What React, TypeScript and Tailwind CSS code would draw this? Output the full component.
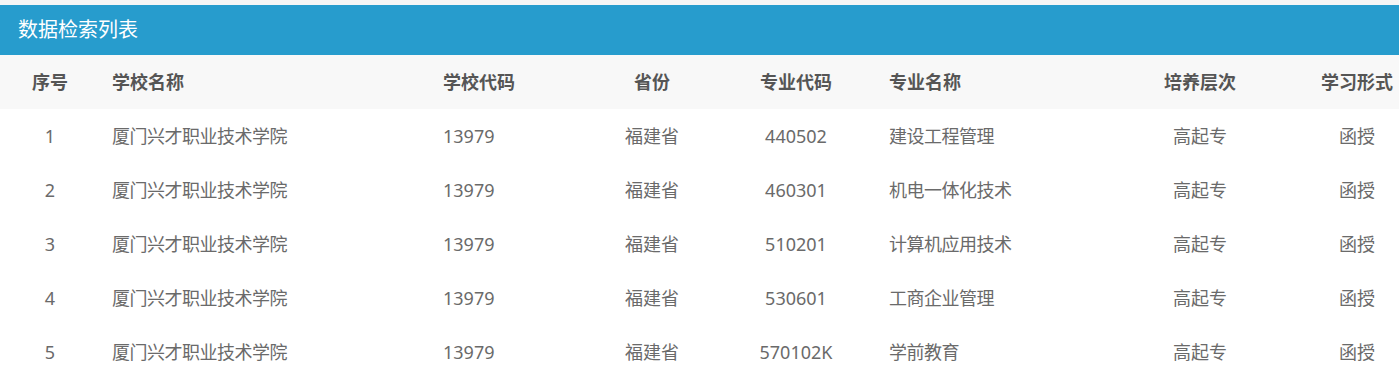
const rows = [
  { no: 1, school: "厦门兴才职业技术学院", code: "13979", prov: "福建省", major: "440502", name: "建设工程管理", level: "高起专", form: "函授" },
  { no: 2, school: "厦门兴才职业技术学院", code: "13979", prov: "福建省", major: "460301", name: "机电一体化技术", level: "高起专", form: "函授" },
  { no: 3, school: "厦门兴才职业技术学院", code: "13979", prov: "福建省", major: "510201", name: "计算机应用技术", level: "高起专", form: "函授" },
  { no: 4, school: "厦门兴才职业技术学院", code: "13979", prov: "福建省", major: "530601", name: "工商企业管理", level: "高起专", form: "函授" },
  { no: 5, school: "厦门兴才职业技术学院", code: "13979", prov: "福建省", major: "570102K", name: "学前教育", level: "高起专", form: "函授" },
];

const cols = "grid grid-cols-[100px_331px_149px_144px_144px_217px_230px_84px]";

export default function App() {
  return (
    <div className="min-h-screen bg-white pt-[5px] font-['Noto_Sans','Noto_Sans_CJK_SC',sans-serif]">
      <div className="fixed inset-x-0 top-0 h-[5px] bg-[#f5f5f5]" />
      {/* Title bar */}
      <div className="flex h-[50px] items-center bg-[#279ccd] px-[18px] text-[20px] text-white">
        数据检索列表
      </div>

      {/* Header */}
      <div className={`${cols} h-[54px] items-center bg-[#f8f8f8] text-[18px] font-bold text-[#555]`}>
        <div className="text-center">序号</div>
        <div className="pl-3">学校名称</div>
        <div className="pl-3">学校代码</div>
        <div className="text-center">省份</div>
        <div className="text-center">专业代码</div>
        <div className="pl-[21px]">专业名称</div>
        <div className="text-center">培养层次</div>
        <div className="text-center">学习形式</div>
      </div>

      {/* Rows */}
      {rows.map((r) => (
        <div key={r.no} className={`${cols} h-[54px] items-center text-[18px] text-[#6a6a6a]`}>
          <div className="text-center">{r.no}</div>
          <div className="pl-3 tracking-[-0.5px]">{r.school}</div>
          <div className="pl-3">{r.code}</div>
          <div className="text-center">{r.prov}</div>
          <div className="text-center">{r.major}</div>
          <div className="pl-[21px] tracking-[-0.5px]">{r.name}</div>
          <div className="text-center">{r.level}</div>
          <div className="text-center">{r.form}</div>
        </div>
      ))}
    </div>
  );
}
